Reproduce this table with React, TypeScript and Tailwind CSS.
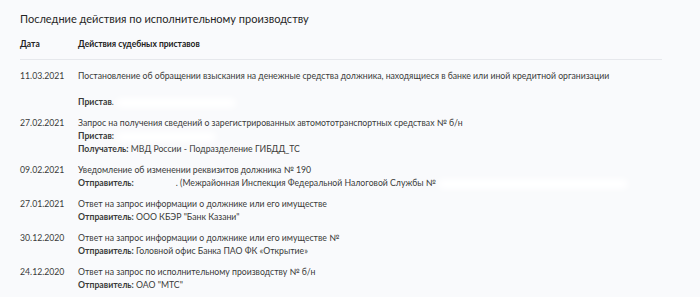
import React from "react";

type Row = {
  date: string;
  title: string;
  extra?: React.ReactNode;
};

const Blur = ({ w }: { w: number }) => (
  <span
    className="inline-block h-[10px] align-middle bg-white rounded-full blur-[3px]"
    style={{ width: w }}
  />
);

const rows: Row[] = [
  {
    date: "11.03.2021",
    title: "Постановление об обращении взыскания на денежные средства должника, находящиеся в банке или иной кредитной организации",
    extra: (
      <>
        <div className="h-[13px]" />
        <div>
          <b className="font-bold">Пристав</b>. <Blur w={120} />
        </div>
      </>
    ),
  },
  {
    date: "27.02.2021",
    title: "Запрос на получения сведений о зарегистрированных автомототранспортных средствах № б/н",
    extra: (
      <>
        <div>
          <b className="font-bold">Пристав:</b> <Blur w={100} />
        </div>
        <div>
          <b className="font-bold">Получатель:</b> МВД России - Подразделение ГИБДД_ТС
        </div>
      </>
    ),
  },
  {
    date: "09.02.2021",
    title: "Уведомление об изменении реквизитов должника № 190",
    extra: (
      <div>
        <b className="font-bold">Отправитель:</b>
        <span className="inline-block w-[42px]" />. (Межрайонная Инспекция Федеральной Налоговой Службы № <Blur w={190} />
      </div>
    ),
  },
  {
    date: "27.01.2021",
    title: "Ответ на запрос информации о должнике или его имуществе",
    extra: (
      <div>
        <b className="font-bold">Отправитель:</b> ООО КБЭР "Банк Казани"
      </div>
    ),
  },
  {
    date: "30.12.2020",
    title: "Ответ на запрос информации о должнике или его имуществе №",
    extra: (
      <div>
        <b className="font-bold">Отправитель:</b> Головной офис Банка ПАО ФК «Открытие»
      </div>
    ),
  },
  {
    date: "24.12.2020",
    title: "Ответ на запрос по исполнительному производству № б/н",
    extra: (
      <div>
        <b className="font-bold">Отправитель:</b> ОАО "МТС"
      </div>
    ),
  },
];

export default function App() {
  return (
    <div
      className="w-[700px] h-[297px] overflow-hidden bg-[#f9fafc] text-[#3a3a3a] px-5 pt-[11px]"
      style={{ fontFamily: "Lato, 'Open Sans', sans-serif" }}
    >
      <h1 className="text-[11px] leading-[16px] text-[#262626]">
        Последние действия по исполнительному производству
      </h1>

      <div className="w-[642px] mt-[11px] flex text-[8.5px] leading-[13px] font-bold text-[#222] pb-[8px] border-b border-[#e6e8ec]">
        <div className="w-[58px] shrink-0">Дата</div>
        <div>Действия судебных приставов</div>
      </div>

      <div className="flex flex-col gap-[8px] pt-[9px] text-[8.7px] leading-[13px]">
        {rows.map((r) => (
          <div key={r.date} className="flex">
            <div className="w-[58px] shrink-0">{r.date}</div>
            <div className="flex-1">
              <div>{r.title}</div>
              {r.extra}
            </div>
          </div>
        ))}
      </div>
    </div>
  );
}
